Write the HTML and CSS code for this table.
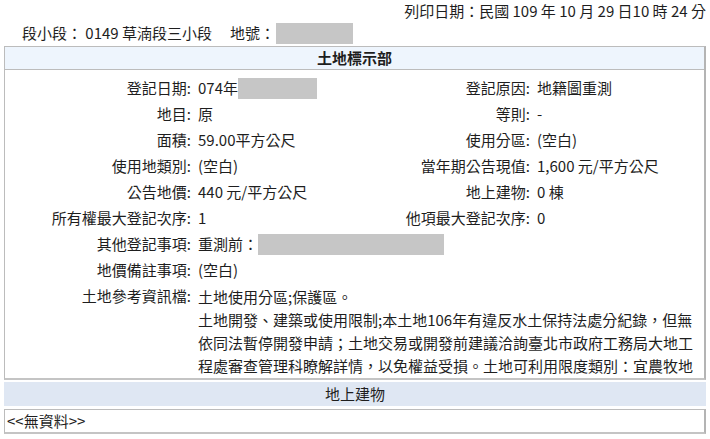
FILE: index.html
```html
<!DOCTYPE html>
<html lang="zh-Hant">
<head>
<meta charset="utf-8">
<title>土地標示部</title>
<link rel="stylesheet" href="styles.css">
</head>
<body>
<div class="page">
  <div class="print-date">列印日期：民國 109 年 10 月 29 日10 時 24 分</div>
  <div class="parcel">段小段： 0149 草湳段三小段<span class="gap"></span>地號：<span class="mask mask-no"></span></div>

  <section class="panel">
    <h2 class="panel-head">土地標示部</h2>
    <div class="grid">
      <div class="lbl">登記日期:</div><div class="val">074年<span class="mask mask-date"></span></div>
      <div class="lbl">登記原因:</div><div class="val">地籍圖重測</div>

      <div class="lbl">地目:</div><div class="val">原</div>
      <div class="lbl">等則:</div><div class="val">-</div>

      <div class="lbl">面積:</div><div class="val">59.00平方公尺</div>
      <div class="lbl">使用分區:</div><div class="val">(空白)</div>

      <div class="lbl">使用地類別:</div><div class="val">(空白)</div>
      <div class="lbl">當年期公告現值:</div><div class="val">1,600 元/平方公尺</div>

      <div class="lbl">公告地價:</div><div class="val">440 元/平方公尺</div>
      <div class="lbl">地上建物:</div><div class="val">0 棟</div>

      <div class="lbl">所有權最大登記次序:</div><div class="val">1</div>
      <div class="lbl">他項最大登記次序:</div><div class="val">0</div>

      <div class="lbl">其他登記事項:</div><div class="val wide">重測前：<span class="mask mask-old"></span></div>

      <div class="lbl">地價備註事項:</div><div class="val wide">(空白)</div>

      <div class="lbl">土地參考資訊檔:</div>
      <div class="val wide notes">土地使用分區;保護區。<br>土地開發、建築或使用限制;本土地106年有違反水土保持法處分紀錄，但無<br>依同法暫停開發申請；土地交易或開發前建議洽詢臺北市政府工務局大地工<br>程處審查管理科瞭解詳情，以免權益受損。土地可利用限度類別：宜農牧地</div>
    </div>
  </section>

  <h2 class="sub-head">地上建物</h2>
  <div class="empty">&lt;&lt;無資料&gt;&gt;</div>
</div>
</body>
</html>
```

FILE: styles.css
```css
html, body {
  margin: 0;
  padding: 0;
  background: #ffffff;
}

body {
  font-family: "Noto Sans CJK TC", "Noto Sans", sans-serif;
  font-size: 15px;
  color: #1e1e1e;
}

.page {
  width: 702px;
  padding: 0 4px;
}

.print-date {
  height: 22px;
  line-height: 22px;
  text-align: right;
}

.parcel {
  height: 22px;
  line-height: 22px;
  padding-left: 18px;
  margin-bottom: 2px;
  display: flex;
  align-items: center;
}

.gap {
  display: inline-block;
  width: 18px;
}

.mask {
  display: inline-block;
  background: #c6c6c6;
  height: 21px;
  vertical-align: middle;
}

.mask-no {
  width: 77px;
  margin-left: 1px;
}

.mask-date {
  width: 79px;
}

.mask-old {
  width: 186px;
}

.panel {
  border: 1px solid #bcbcbc;
  border-right: 2px solid #b4b4b4;
  border-bottom: 2px solid #c4c4c4;
}

.panel-head {
  margin: 0;
  height: 22px;
  line-height: 22px;
  background: #eef5fd;
  border-bottom: 1px solid #bcbcbc;
  text-align: center;
  font-size: 15px;
  font-weight: bold;
}

.grid {
  display: grid;
  grid-template-columns: 186px 206px 133px 1fr;
  padding-top: 5px;
}

.lbl,
.val {
  line-height: 22px;
  padding: 2px 0;
  white-space: nowrap;
}

.lbl {
  text-align: right;
}

.val {
  padding-left: 7px;
  display: flex;
  align-items: center;
}

.val.wide {
  grid-column: 2 / 5;
}

.notes {
  display: block;
  line-height: 23px;
  padding-bottom: 1px;
}

.sub-head {
  margin: 2px 0 0;
  height: 24px;
  line-height: 24px;
  background: #dfe7f3;
  text-align: center;
  font-size: 15px;
  font-weight: normal;
}

.empty {
  margin-top: 3px;
  height: 22px;
  line-height: 22px;
  padding-left: 2px;
  border: 1px solid #bcbcbc;
  border-right: 2px solid #b4b4b4;
  border-bottom: 2px solid #c4c4c4;
}
```
